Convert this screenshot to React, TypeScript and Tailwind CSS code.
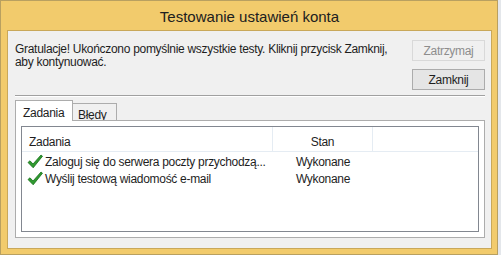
import React from 'react';

const font = { fontFamily: '"Liberation Sans", Arial, sans-serif' };

function Check() {
  return (
    <svg width="16" height="15" viewBox="0 0 16 15" className="shrink-0">
      <path d="M1 8.5 L3 6.8 L6 10 L14 1 L15.5 2.2 L6.2 13.8 Z" fill="#2f9a2f" stroke="#17701a" strokeWidth="0.8" strokeLinejoin="round" />
    </svg>
  );
}

const rows = [
  { task: 'Zaloguj się do serwera poczty przychodzą...', state: 'Wykonane' },
  { task: 'Wyślij testową wiadomość e-mail', state: 'Wykonane' },
];

export default function App() {
  return (
    <div className="flex w-[501px] h-[255px] bg-[#e4e7eb] text-[12px] tracking-[-0.3px] text-[#1e1e1e]" style={font}>
      <div className="flex flex-col w-[498px] h-[255px] border border-[#b9a060] bg-[#f2cb6c] pl-[6px] pr-[5px] pb-[5px]">
        <div className="h-[29px] flex items-center justify-center pt-[3px] text-[15px] tracking-normal text-[#202020]">
          Testowanie ustawień konta
        </div>
        <div className="flex-1 flex flex-col border border-[#c9a85a] bg-[#f0f0f0] pl-[7px] pr-[6px]">
          <div className="flex">
            <p className="flex-1 pt-[12px] leading-[13px] whitespace-nowrap">
              Gratulacje! Ukończono pomyślnie wszystkie testy. Kliknij przycisk Zamknij,
              <br />
              aby kontynuować.
            </p>
            <div className="flex flex-col gap-[8px] pt-[9px]">
              <div className="w-[73px] h-[21px] flex items-center justify-center border border-[#d9d9d9] bg-[#f0f0f0] text-[#8d8d8d]">
                Zatrzymaj
              </div>
              <div className="w-[73px] h-[21px] flex items-center justify-center border border-[#acacac] bg-[#e5e5e5]">
                Zamknij
              </div>
            </div>
          </div>
          <div className="mt-[5px] h-[2px] border-t border-[#a0a0a0] border-b border-b-white" />
          <div className="mt-[3px] flex items-end h-[20px]">
            <div className="h-[21px] w-[58px] -mb-px z-10 border border-b-0 border-[#acacac] bg-white pl-[7px] pt-[3px]">
              Zadania
            </div>
            <div className="h-[17px] w-[45px] -ml-px border border-b-0 border-[#acacac] bg-[#f0f0f0] pl-[5px] pt-[2px]">
              Błędy
            </div>
          </div>
          <div className="h-[118px] border border-[#acacac] bg-white p-[5px]">
            <div className="h-full border border-[#828790] bg-white">
              <div className="flex h-[25px] border-b border-[#e5ecf3]">
                <div className="w-[251px] pl-[7px] pt-[6px] border-r border-[#e5ecf3]">Zadania</div>
                <div className="w-[100px] text-center pt-[6px] border-r border-[#e5ecf3]">Stan</div>
              </div>
              <div className="pt-[1px]">
                {rows.map((r) => (
                  <div key={r.task} className="flex h-[17px] items-center">
                    <div className="w-[251px] flex items-center pl-[5px] gap-[2px] overflow-hidden whitespace-nowrap">
                      <Check />
                      <span>{r.task}</span>
                    </div>
                    <div className="w-[100px] text-center">{r.state}</div>
                  </div>
                ))}
              </div>
            </div>
          </div>
        </div>
      </div>
    </div>
  );
}
